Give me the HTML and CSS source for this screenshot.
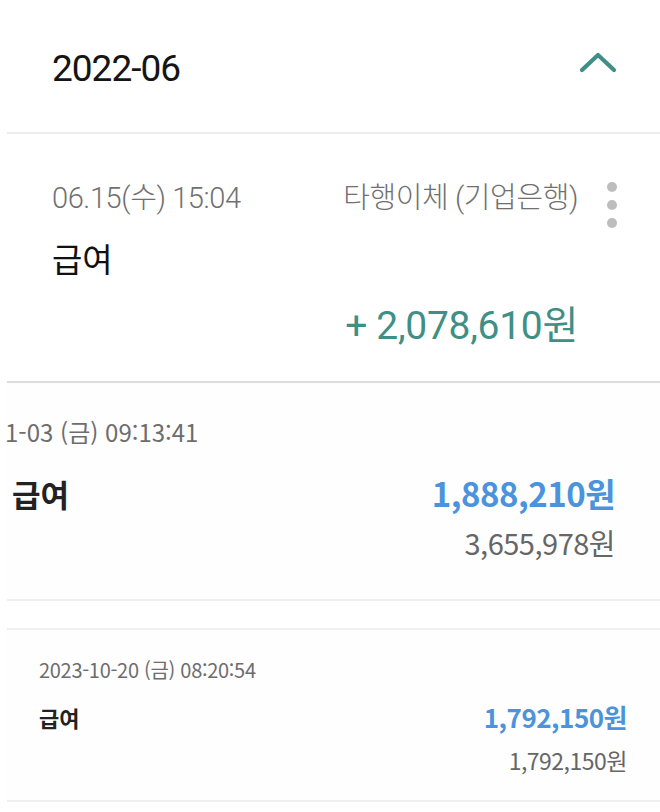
FILE: index.html
```html
<!DOCTYPE html>
<html lang="ko">
<head>
  <meta charset="UTF-8" />
  <meta name="viewport" content="width=device-width, initial-scale=1" />
  <title>급여 내역</title>
  <link rel="stylesheet" href="styles.css">
</head>
<body>
  <!-- 월별 헤더 -->
  <div class="bulan">
    <span class="bulan-judul">2022-06</span>
    <svg class="chevron" width="38" height="24" viewBox="0 0 38 24">
      <path d="M3 20 L19 5 L35 20" fill="none" stroke="#3f8f87" stroke-width="4.2" stroke-linecap="round" stroke-linejoin="round"/>
    </svg>
  </div>

  <!-- 거래 1 -->
  <div class="transaksi">
    <div class="baris-atas">
      <span class="tanggal">06.15(수) 15:04</span>
      <span class="bank">타행이체 (기업은행)</span>
      <span class="titik"><i></i><i></i><i></i></span>
    </div>
    <div class="judul">급여</div>
    <div class="nominal">+ 2,078,610원</div>
  </div>

  <!-- 거래 2 -->
  <div class="kartu kartu-besar">
    <div class="kartu-tanggal">1-03 (금) 09:13:41</div>
    <div class="kartu-baris">
      <span class="kartu-judul">급여</span>
      <span class="kartu-nominal">1,888,210원</span>
    </div>
    <div class="kartu-saldo">3,655,978원</div>
  </div>

  <div class="jeda"></div>

  <!-- 거래 3 -->
  <div class="kartu kartu-kecil">
    <div class="kartu-tanggal">2023-10-20 (금) 08:20:54</div>
    <div class="kartu-baris">
      <span class="kartu-judul">급여</span>
      <span class="kartu-nominal">1,792,150원</span>
    </div>
    <div class="kartu-saldo">1,792,150원</div>
  </div>
</body>
</html>
```

FILE: styles.css
```css
body {
  margin: 0;
  background: #fff;
  font-family: Roboto, 'Noto Sans CJK KR', sans-serif;
  color: #111;
  width: 660px;
  overflow: hidden;
}

/* Header bulan */
.bulan {
  margin-left: 7px;
  height: 134px;
  border-bottom: 2px solid #ececec;
  display: flex;
  align-items: center;
  justify-content: space-between;
  padding: 4px 43px 0 45px;
  box-sizing: border-box;
}

.bulan-judul {
  font-size: 37px;
  color: #151515;
  letter-spacing: -1px;
}

.chevron {
  margin-top: -12px;
}

/* Transaksi pertama */
.transaksi {
  margin-left: 7px;
  height: 249px;
  box-sizing: border-box;
  border-bottom: 2px solid #dcdcdc;
  padding: 40px 0 0 45px;
  position: relative;
}

.baris-atas {
  display: flex;
  align-items: center;
  height: 42px;
  padding-right: 82px;
  justify-content: space-between;
}

.tanggal,
.bank {
  font-size: 29px;
  font-weight: 300;
  color: #707070;
  letter-spacing: -0.4px;
}

.titik {
  position: absolute;
  right: 43px;
  top: 48px;
  display: flex;
  flex-direction: column;
  gap: 8px;
}

.titik i {
  display: block;
  width: 10px;
  height: 10px;
  border-radius: 50%;
  background: #bdbdbd;
}

.judul {
  margin-top: 18px;
  font-size: 33px;
  color: #111;
}

.nominal {
  margin-top: 12px;
  padding-right: 82px;
  text-align: right;
  font-size: 39px;
  color: #3f8f87;
  letter-spacing: -0.3px;
}

/* Kartu gaya kedua */
.kartu {
  font-family: 'Noto Sans CJK KR', sans-serif;
  margin-left: 7px;
  box-sizing: border-box;
  background: #fefefe;
  border-bottom: 2px solid #efefef;
}

.kartu-besar {
  height: 218px;
  padding: 31px 45px 0 0;
}

.kartu-besar .kartu-tanggal {
  font-size: 24px;
  color: #6d6d6d;
  white-space: nowrap;
  height: 37px;
  margin-left: -2px;
}

.kartu-besar .kartu-baris {
  margin-top: 18px;
}

.kartu-besar .kartu-judul {
  font-size: 31px;
  padding-left: 5px;
}

.kartu-besar .kartu-nominal {
  font-size: 33px;
}

.kartu-besar .kartu-saldo {
  margin-top: 4px;
  font-size: 29px;
}

.kartu-baris {
  display: flex;
  justify-content: space-between;
  align-items: center;
}

.kartu-judul {
  font-weight: 700;
  color: #222;
}

.kartu-nominal {
  font-weight: 700;
  color: #4b93dc;
  letter-spacing: -0.5px;
}

.kartu-saldo {
  text-align: right;
  color: #666;
  letter-spacing: -0.5px;
}

.jeda {
  height: 27px;
  margin-left: 7px;
  border-bottom: 2px solid #f0f0f0;
}

.kartu-kecil {
  height: 172px;
  padding: 25px 33px 0 32px;
}

.kartu-kecil .kartu-tanggal {
  font-size: 20px;
  color: #6d6d6d;
  letter-spacing: -0.3px;
}

.kartu-kecil .kartu-baris {
  margin-top: 14px;
}

.kartu-kecil .kartu-judul {
  font-size: 22px;
}

.kartu-kecil .kartu-nominal {
  font-size: 26px;
}

.kartu-kecil .kartu-saldo {
  margin-top: 8px;
  font-size: 23px;
}
```
